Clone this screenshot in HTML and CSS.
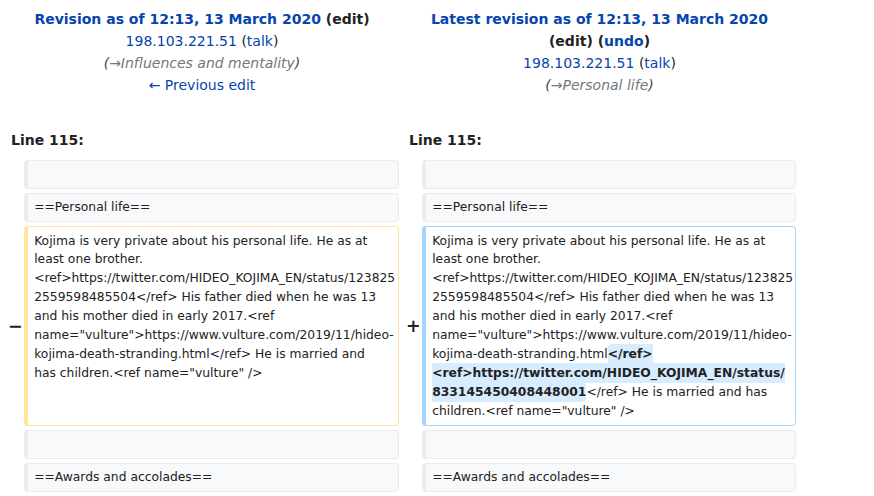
FILE: index.html
```html
<!DOCTYPE html>
<html lang="en">
<head>
<meta charset="utf-8">
<title>Difference between revisions</title>
<link rel="stylesheet" href="styles.css">
</head>
<body>
<div class="diff">
  <div class="title">
    <div class="strong"><a href="#">Revision as of 12:13, 13 March 2020</a> (edit)</div>
    <div><a href="#">198.103.221.51</a> (<a href="#">talk</a>)</div>
    <div class="comment">(<span class="auto">→Influences and mentality</span>)</div>
    <div><a href="#">← Previous edit</a></div>
  </div>
  <div class="title">
    <div class="strong"><a href="#">Latest revision as of 12:13, 13 March 2020</a></div>
    <div class="strong">(edit) (<a href="#">undo</a>)</div>
    <div><a href="#">198.103.221.51</a> (<a href="#">talk</a>)</div>
    <div class="comment">(<span class="auto">→Personal life</span>)</div>
  </div>

  <div class="lineno">Line 115:</div>
  <div class="lineno">Line 115:</div>

  <div class="marker"></div>
  <div class="cell ctx">&nbsp;</div>
  <div class="marker"></div>
  <div class="cell ctx">&nbsp;</div>

  <div class="marker"></div>
  <div class="cell ctx">==Personal life==</div>
  <div class="marker"></div>
  <div class="cell ctx">==Personal life==</div>

  <div class="marker">−</div>
  <div class="cell del">Kojima is very private about his personal life. He as at<br>least one brother.<br>&lt;ref&gt;https://twitter.com/HIDEO_KOJIMA_EN/status/123825<br>2559598485504&lt;/ref&gt; His father died when he was 13<br>and his mother died in early 2017.&lt;ref<br>name="vulture"&gt;https://www.vulture.com/2019/11/hideo-<br>kojima-death-stranding.html&lt;/ref&gt; He is married and<br>has children.&lt;ref name="vulture" /&gt;</div>
  <div class="marker">+</div>
  <div class="cell add">Kojima is very private about his personal life. He as at<br>least one brother.<br>&lt;ref&gt;https://twitter.com/HIDEO_KOJIMA_EN/status/123825<br>2559598485504&lt;/ref&gt; His father died when he was 13<br>and his mother died in early 2017.&lt;ref<br>name="vulture"&gt;https://www.vulture.com/2019/11/hideo-<br>kojima-death-stranding.html<span class="chg">&lt;/ref&gt;<br>&lt;ref&gt;https://twitter.com/HIDEO_KOJIMA_EN/status/<br>833145450408448001</span>&lt;/ref&gt; He is married and has<br>children.&lt;ref name="vulture" /&gt;</div>

  <div class="marker"></div>
  <div class="cell ctx">&nbsp;</div>
  <div class="marker"></div>
  <div class="cell ctx">&nbsp;</div>

  <div class="marker"></div>
  <div class="cell ctx">==Awards and accolades==</div>
  <div class="marker"></div>
  <div class="cell ctx">==Awards and accolades==</div>
</div>
</body>
</html>
```

FILE: styles.css
```css
html, body {
  margin: 0;
  padding: 0;
  background: #ffffff;
}

body {
  font-family: "DejaVu Sans", sans-serif;
  color: #222222;
}

a {
  color: #0645ad;
  text-decoration: none;
}

.diff {
  display: grid;
  grid-template-columns: 15px 375px 15px 374px;
  column-gap: 4px;
  row-gap: 4px;
  padding: 4px 0 0 5px;
  align-items: stretch;
}

.title {
  grid-column: span 2;
  text-align: center;
  font-size: 14px;
  line-height: 22px;
  padding: 4.3px 7px;
}

.strong {
  font-weight: bold;
}

.comment {
  font-style: italic;
  color: #444444;
}

.comment .auto {
  color: #72777d;
}

.lineno {
  grid-column: span 2;
  font-weight: bold;
  font-size: 14px;
  line-height: 21.8px;
  padding: 4.3px 6px;
  margin-top: 21.4px;
}

.marker {
  display: flex;
  align-items: center;
  font-weight: bold;
  font-size: 17.5px;
  line-height: 1.2;
  padding-left: 3px;
  white-space: nowrap;
  color: #222222;
}

.cell {
  font-size: 12.32px;
  line-height: 18.9px;
  padding: 4.07px 6.16px;
  border-style: solid;
  border-width: 1px 1px 1px 4px;
  border-radius: 4px;
  white-space: pre;
  color: #222222;
  min-width: 0;
}

.ctx {
  background: #f8f9fa;
  border-color: #eaecf0;
}

.del {
  background: #ffffff;
  border-color: #ffe49c;
}

.add {
  background: #ffffff;
  border-color: #a3d3ff;
}

.chg {
  font-weight: bold;
  background: #d8ecff;
  border-radius: 4px;
  padding: 3px 0;
}
```
